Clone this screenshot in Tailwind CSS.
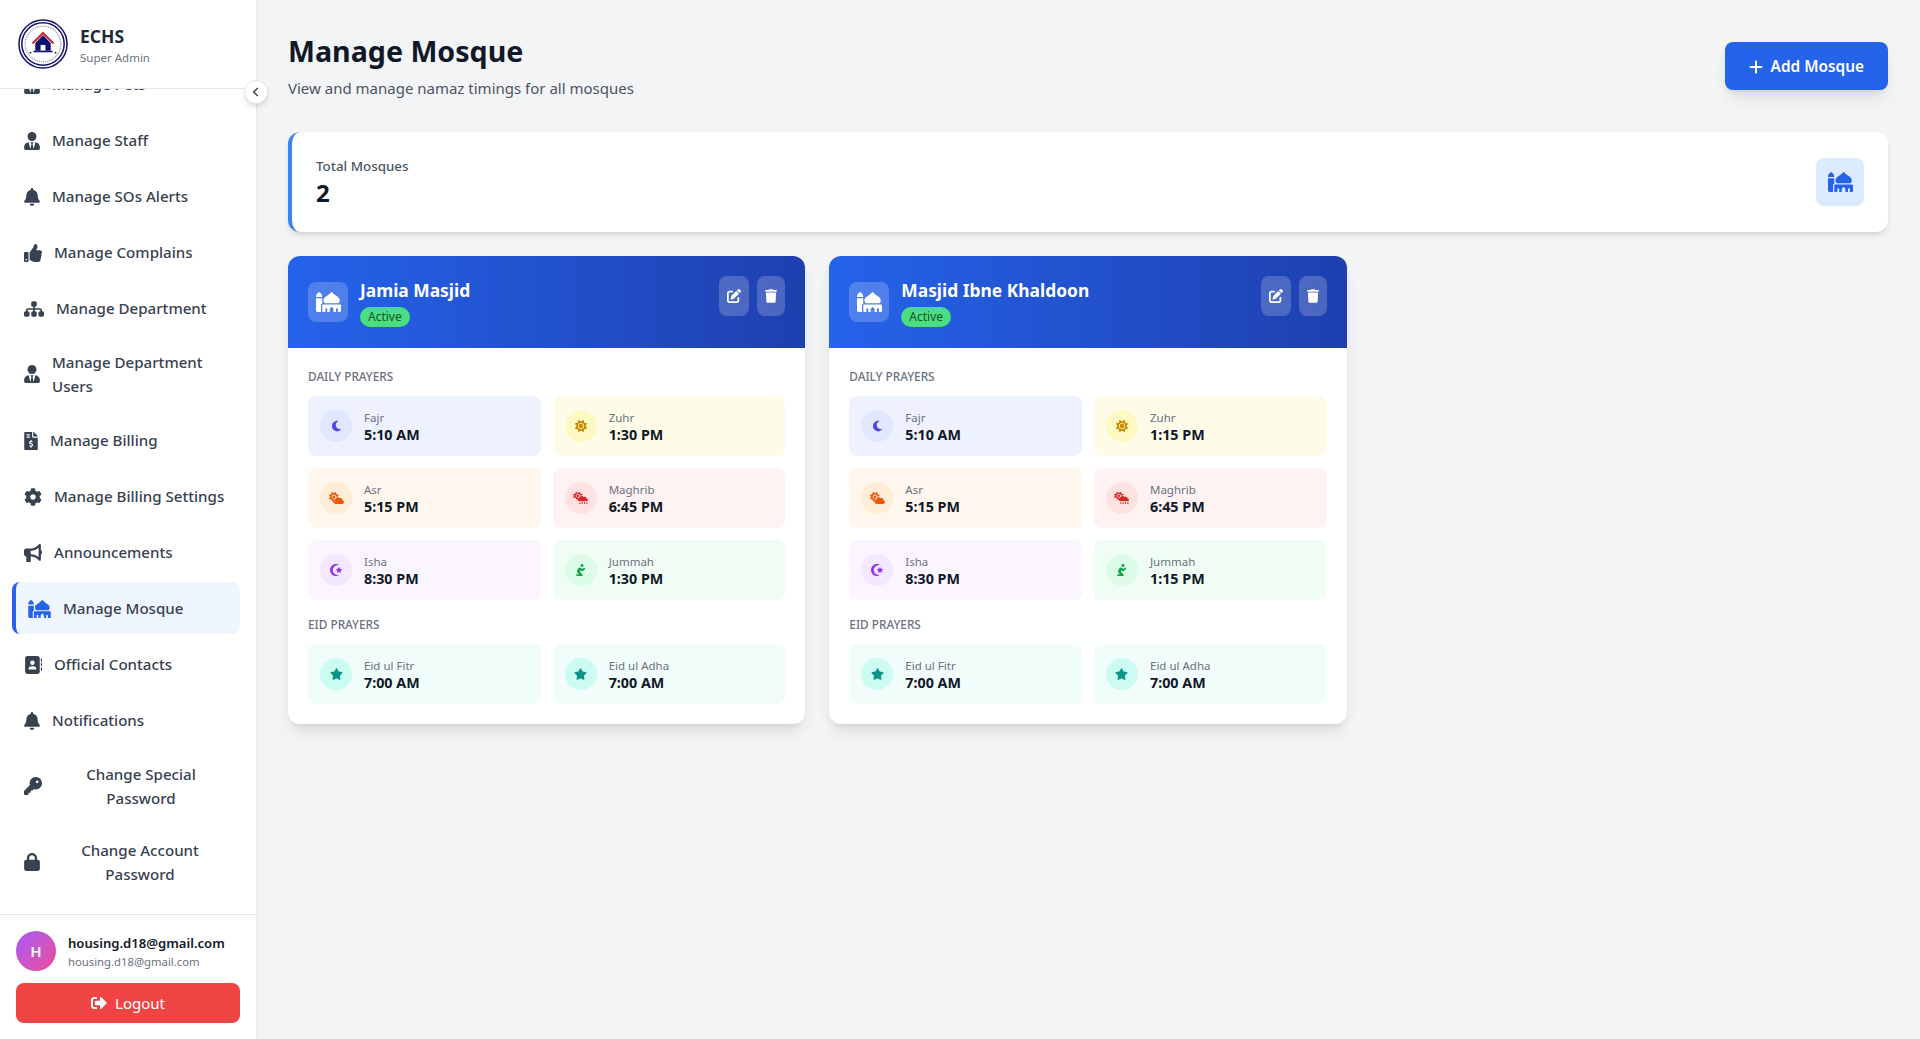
<!DOCTYPE html>
<html lang="en">

<head>
    <meta charset="UTF-8">
    <meta name="viewport" content="width=device-width, initial-scale=1.0">
    <script src="https://cdn.jsdelivr.net/npm/@tailwindcss/browser@4"></script>
    <title>Manage Mosque</title>
</head>

<body class="h-screen overflow-hidden bg-[#f3f4f6] font-['Noto_Sans',sans-serif]">
    <!-- icon sprite -->
    <svg class="hidden">
        <symbol id="i-tie" viewBox="0 0 448 512"><path d="M224 256c70.7 0 128-57.3 128-128S294.7 0 224 0 96 57.3 96 128s57.3 128 128 128zm95.8 32.6L272 480l-32-136 32-56h-96l32 56-32 136-47.8-191.4C56.9 292 0 350.3 0 422.4V464c0 26.5 21.5 48 48 48h352c26.5 0 48-21.5 48-48v-41.6c0-72.1-56.9-130.4-128.2-133.8z"/></symbol>
        <symbol id="i-bell" viewBox="0 0 448 512"><path d="M224 512c35.32 0 63.97-28.65 63.97-64H160.03c0 35.35 28.65 64 63.97 64zm215.39-149.71c-19.32-20.76-55.47-51.99-55.47-154.29 0-77.7-54.48-139.9-127.94-155.16V32c0-17.67-14.32-32-31.98-32s-31.98 14.33-31.98 32v20.84C118.56 68.1 64.08 130.3 64.08 208c0 102.3-36.15 133.53-55.47 154.29-6 6.45-8.66 14.16-8.61 21.71.11 16.4 12.98 32 32.1 32h383.8c19.12 0 32-15.6 32.1-32 .05-7.55-2.61-15.27-8.61-21.71z"/></symbol>
        <symbol id="i-thumb" viewBox="0 0 512 512"><path d="M104 224H24c-13.255 0-24 10.745-24 24v240c0 13.255 10.745 24 24 24h80c13.255 0 24-10.745 24-24V248c0-13.255-10.745-24-24-24zM64 472c-13.255 0-24-10.745-24-24s10.745-24 24-24 24 10.745 24 24-10.745 24-24 24zM384 81.452c0 42.416-25.97 66.208-33.277 94.548h101.723c33.397 0 59.397 27.746 59.553 58.098.084 17.938-7.546 37.249-19.439 49.197l-.11.11c9.836 23.337 8.237 56.037-9.308 79.469 8.681 25.895-.069 57.704-16.382 74.757 4.298 17.598 2.244 32.575-6.148 44.632C440.202 511.587 389.616 512 346.839 512l-2.845-.001c-48.287-.017-87.806-17.598-119.56-31.725-15.957-7.099-36.821-15.887-52.651-16.178-6.54-.12-11.783-5.457-11.783-11.998v-213.77c0-3.2 1.282-6.271 3.558-8.521 39.614-39.144 56.648-80.587 89.117-113.111 14.804-14.832 20.188-37.236 25.393-58.902C282.515 39.293 291.817 0 312 0c24 0 72 8 72 81.452z"/></symbol>
        <symbol id="i-sitemap" viewBox="0 0 576 512"><path d="M208 80c0-26.5 21.5-48 48-48h64c26.5 0 48 21.5 48 48v64c0 26.5-21.5 48-48 48h-8v40H464c30.9 0 56 25.1 56 56v32h8c26.5 0 48 21.5 48 48v64c0 26.5-21.5 48-48 48H464c-26.5 0-48-21.5-48-48V368c0-26.5 21.5-48 48-48h8V288c0-4.4-3.6-8-8-8H312v40h8c26.5 0 48 21.5 48 48v64c0 26.5-21.5 48-48 48H256c-26.5 0-48-21.5-48-48V368c0-26.5 21.5-48 48-48h8V280H112c-4.4 0-8 3.6-8 8v32h8c26.5 0 48 21.5 48 48v64c0 26.5-21.5 48-48 48H48c-26.5 0-48-21.5-48-48V368c0-26.5 21.5-48 48-48h8V288c0-30.9 25.1-56 56-56H264V192h-8c-26.5 0-48-21.5-48-48V80z"/></symbol>
        <symbol id="i-invoice" viewBox="0 0 384 512"><path d="M377 105L279.1 7c-4.5-4.5-10.6-7-17-7H256v128h128v-6.1c0-6.3-2.5-12.4-7-16.9zm-153 31V0H24C10.7 0 0 10.7 0 24v464c0 13.3 10.7 24 24 24h336c13.3 0 24-10.7 24-24V160H248c-13.2 0-24-10.8-24-24zM64 72c0-4.42 3.58-8 8-8h80c4.42 0 8 3.58 8 8v16c0 4.42-3.58 8-8 8H72c-4.42 0-8-3.58-8-8V72zm0 80v-16c0-4.42 3.58-8 8-8h80c4.42 0 8 3.58 8 8v16c0 4.42-3.58 8-8 8H72c-4.42 0-8-3.58-8-8zm144 263.88V440c0 4.42-3.58 8-8 8h-16c-4.42 0-8-3.58-8-8v-24.29c-11.29-.58-22.27-4.52-31.37-11.35-3.9-2.93-4.1-8.77-.57-12.14l11.75-11.21c2.77-2.64 6.89-2.76 10.13-.73 3.87 2.42 8.26 3.72 12.82 3.72h28.11c6.5 0 11.8-5.92 11.8-13.19 0-5.95-3.61-11.19-8.77-12.73l-45-13.5c-18.59-5.58-31.58-23.42-31.58-43.39 0-24.52 19.05-44.44 42.67-45.07V232c0-4.42 3.58-8 8-8h16c4.42 0 8 3.58 8 8v24.29c11.29.58 22.27 4.51 31.37 11.35 3.9 2.93 4.1 8.77.57 12.14l-11.75 11.21c-2.77 2.64-6.89 2.76-10.13.73-3.87-2.43-8.26-3.72-12.82-3.72h-28.11c-6.5 0-11.8 5.92-11.8 13.19 0 5.95 3.61 11.19 8.77 12.73l45 13.5c18.59 5.58 31.58 23.42 31.58 43.39 0 24.53-19.05 44.44-42.67 45.07z"/></symbol>
        <symbol id="i-cog" viewBox="0 0 512 512"><path d="M487.4 315.7l-42.6-24.6c4.3-23.2 4.3-47 0-70.2l42.6-24.6c4.9-2.8 7.1-8.6 5.5-14-11.1-35.6-30-67.8-54.7-94.6-3.8-4.1-10-5.1-14.8-2.3L380.8 110c-17.9-15.4-38.5-27.3-60.8-35.1V25.8c0-5.6-3.9-10.5-9.4-11.7-36.7-8.2-74.3-7.8-109.2 0-5.5 1.2-9.4 6.1-9.4 11.7V75c-22.2 7.9-42.8 19.8-60.8 35.1L88.7 85.5c-4.9-2.8-11-1.9-14.8 2.3-24.7 26.7-43.6 58.9-54.7 94.6-1.7 5.4.6 11.2 5.5 14L67.3 221c-4.3 23.2-4.3 47 0 70.2l-42.6 24.6c-4.9 2.8-7.1 8.6-5.5 14 11.1 35.6 30 67.8 54.7 94.6 3.8 4.1 10 5.1 14.8 2.3l42.6-24.6c17.9 15.4 38.5 27.3 60.8 35.1v49.2c0 5.6 3.9 10.5 9.4 11.7 36.7 8.2 74.3 7.8 109.2 0 5.5-1.2 9.4-6.1 9.4-11.7v-49.2c22.2-7.9 42.8-19.8 60.8-35.1l42.6 24.6c4.9 2.8 11 1.9 14.8-2.3 24.7-26.7 43.6-58.9 54.7-94.6 1.5-5.5-.7-11.3-5.6-14.1zM256 336c-44.1 0-80-35.9-80-80s35.9-80 80-80 80 35.9 80 80-35.9 80-80 80z"/></symbol>
        <symbol id="i-bullhorn" viewBox="0 0 512 512"><path d="M480 32c0-12.9-7.8-24.6-19.8-29.6s-25.7-2.2-34.9 6.9L381.7 53c-48 48-113.1 75-181 75H192 160 64c-35.3 0-64 28.7-64 64v96c0 35.3 28.7 64 64 64l0 128c0 17.7 14.3 32 32 32h64c17.7 0 32-14.3 32-32V352l8.7 0c67.9 0 133 27 181 75l43.6 43.6c9.2 9.2 22.9 11.9 34.9 6.9s19.8-16.6 19.8-29.6V300.4c18.6-8.8 32-32.5 32-60.4s-13.4-51.6-32-60.4V32zm-64 76.7V240 371.3C357.2 317.8 280.5 288 200.7 288H192V192h8.7c79.8 0 156.5-29.8 215.3-83.3z"/></symbol>
        <symbol id="i-mosque" viewBox="0 0 640 512"><path d="M400 0c5 0 9.8 2.4 12.8 6.4c34.7 46.3 78.1 74.9 133.5 111.5l0 0 0 0c5.2 3.4 10.5 7 16 10.6c28.9 19.2 45.7 51.7 45.7 86.1c0 28.6-11.3 54.5-29.8 73.4H221.8c-18.4-19-29.8-44.9-29.8-73.4c0-34.4 16.7-66.9 45.7-86.1c5.4-3.6 10.8-7.1 16-10.6l0 0 0 0C309.1 81.3 352.5 52.7 387.2 6.4c3-4 7.8-6.4 12.8-6.4zM288 512V440c0-13.3-10.7-24-24-24s-24 10.7-24 24v72H192c-17.7 0-32-14.3-32-32V352c0-17.7 14.3-32 32-32H608c17.7 0 32 14.3 32 32V480c0 17.7-14.3 32-32 32H560V440c0-13.3-10.7-24-24-24s-24 10.7-24 24v72H448V454c0-19-8.4-37-23-49.2L400 384l-25 20.8C360.4 417 352 435 352 454v58H288zM70.4 5.2c5.7-4.3 13.5-4.3 19.2 0l16 12C139.8 42.9 160 83.2 160 126v2H0v-2C0 83.2 20.2 42.9 54.4 17.2l16-12zM0 160H160V296.6c-19.1 11.1-32 31.7-32 55.4V480c0 9.6 2.1 18.6 5.8 26.8c-6.6 3.4-14 5.2-21.8 5.2H48c-26.5 0-48-21.5-48-48V176 160z"/></symbol>
        <symbol id="i-contacts" viewBox="0 0 512 512"><path d="M96 0C60.7 0 32 28.7 32 64V448c0 35.3 28.7 64 64 64H384c35.3 0 64-28.7 64-64V64c0-35.3-28.7-64-64-64H96zM208 288h64c44.2 0 80 35.8 80 80c0 8.8-7.2 16-16 16H144c-8.8 0-16-7.2-16-16c0-44.2 35.8-80 80-80zm-32-96a64 64 0 1 1 128 0 64 64 0 1 1 -128 0zM512 80c0-8.8-7.2-16-16-16s-16 7.2-16 16v64c0 8.8 7.2 16 16 16s16-7.2 16-16V80zM496 192c-8.8 0-16 7.2-16 16v64c0 8.8 7.2 16 16 16s16-7.2 16-16V208c0-8.8-7.2-16-16-16zm16 144c0-8.8-7.2-16-16-16s-16 7.2-16 16v64c0 8.8 7.2 16 16 16s16-7.2 16-16V336z"/></symbol>
        <symbol id="i-key" viewBox="0 0 512 512"><path d="M336 352c97.2 0 176-78.8 176-176S433.2 0 336 0S160 78.8 160 176c0 18.7 2.9 36.8 8.3 53.7L7 391c-4.5 4.5-7 10.6-7 17v80c0 13.3 10.7 24 24 24h80c13.3 0 24-10.7 24-24V448h40c13.3 0 24-10.7 24-24V384h40c6.4 0 12.5-2.5 17-7l33.3-33.3c16.9 5.4 35 8.3 53.7 8.3zM376 96a40 40 0 1 1 0 80 40 40 0 1 1 0-80z"/></symbol>
        <symbol id="i-lock" viewBox="0 0 448 512"><path d="M144 144v48H304V144c0-44.2-35.8-80-80-80s-80 35.8-80 80zM80 192V144C80 64.5 144.5 0 224 0s144 64.5 144 144v48h16c35.3 0 64 28.7 64 64V448c0 35.3-28.7 64-64 64H64c-35.3 0-64-28.7-64-64V256c0-35.3 28.7-64 64-64H80z"/></symbol>
        <symbol id="i-logout" viewBox="0 0 512 512"><path d="M497 273L329 441c-15 15-41 4.5-41-17v-96H152c-13.3 0-24-10.7-24-24v-96c0-13.3 10.7-24 24-24h136V88c0-21.4 25.9-32 41-17l168 168c9.3 9.4 9.3 24.6 0 34zM192 436v-40c0-6.6-5.4-12-12-12H96c-17.7 0-32-14.3-32-32V160c0-17.7 14.3-32 32-32h84c6.6 0 12-5.4 12-12V76c0-6.6-5.4-12-12-12H96c-53 0-96 43-96 96v192c0 53 43 96 96 96h84c6.6 0 12-5.4 12-12z"/></symbol>
        <symbol id="i-plus" viewBox="0 0 448 512"><path d="M256 80c0-17.7-14.3-32-32-32s-32 14.3-32 32V224H48c-17.7 0-32 14.3-32 32s14.3 32 32 32H192V432c0 17.7 14.3 32 32 32s32-14.3 32-32V288H400c17.7 0 32-14.3 32-32s-14.3-32-32-32H256V80z"/></symbol>
        <symbol id="i-edit" viewBox="0 0 512 512"><path d="M471.6 21.7c-21.9-21.9-57.3-21.9-79.2 0L362.3 51.7l97.9 97.9 30.1-30.1c21.9-21.9 21.9-57.3 0-79.2L471.6 21.7zm-299.2 220c-6.1 6.1-10.8 13.6-13.5 21.9l-29.6 88.8c-2.9 8.6-.6 18.1 5.8 24.6s15.9 8.7 24.6 5.8l88.8-29.6c8.2-2.7 15.7-7.4 21.9-13.5L437.7 172.3 339.7 74.3 172.4 241.7zM96 64C43 64 0 107 0 160V416c0 53 43 96 96 96H352c53 0 96-43 96-96V320c0-17.7-14.3-32-32-32s-32 14.3-32 32v96c0 17.7-14.3 32-32 32H96c-17.7 0-32-14.3-32-32V160c0-17.7 14.3-32 32-32h96c17.7 0 32-14.3 32-32s-14.3-32-32-32H96z"/></symbol>
        <symbol id="i-trash" viewBox="0 0 448 512"><path d="M135.2 17.7L128 32H32C14.3 32 0 46.3 0 64S14.3 96 32 96H416c17.7 0 32-14.3 32-32s-14.3-32-32-32H320l-7.2-14.3C307.4 6.8 296.3 0 284.2 0H163.8c-12.1 0-23.2 6.8-28.6 17.7zM416 128H32L53.2 467c1.6 25.3 22.6 45 47.9 45H346.9c25.3 0 46.3-19.7 47.9-45L416 128z"/></symbol>
        <symbol id="i-moon" viewBox="0 0 384 512"><path d="M223.5 32C100 32 0 132.3 0 256S100 480 223.5 480c60.6 0 115.5-24.2 155.8-63.4c5-4.9 6.3-12.5 3.1-18.7s-10.1-9.7-17-8.5c-9.8 1.7-19.8 2.6-30.1 2.6c-96.9 0-175.5-78.8-175.5-176c0-65.8 36-123.1 89.3-153.3c6.1-3.5 9.2-10.5 7.7-17.3s-7.3-11.9-14.3-12.5c-6.3-.5-12.6-.8-19-.8z"/></symbol>
        <symbol id="i-sun" viewBox="0 0 512 512"><path d="M361.5 1.2c5 2.1 8.6 6.6 9.6 11.9L391 121l107.9 19.8c5.3 1 9.8 4.6 11.9 9.6s1.5 10.7-1.6 15.2L446.9 256l62.3 90.3c3.1 4.5 3.7 10.2 1.6 15.2s-6.6 8.6-11.9 9.6L391 391 371.1 498.9c-1 5.3-4.6 9.8-9.6 11.9s-10.7 1.5-15.2-1.6L256 446.9l-90.3 62.3c-4.5 3.1-10.2 3.7-15.2 1.6s-8.6-6.6-9.6-11.9L121 391 13.1 371.1c-5.3-1-9.8-4.6-11.9-9.6s-1.5-10.7 1.6-15.2L65.1 256 2.8 165.7c-3.1-4.5-3.7-10.2-1.6-15.2s6.6-8.6 11.9-9.6L121 121 140.9 13.1c1-5.3 4.6-9.8 9.6-11.9s10.7-1.5 15.2 1.6L256 65.1 346.3 2.8c4.5-3.1 10.2-3.7 15.2-1.6zM160 256a96 96 0 1 1 192 0 96 96 0 1 1 -192 0zm224 0a128 128 0 1 0 -256 0 128 128 0 1 0 256 0z"/></symbol>
        <symbol id="i-cloudsun" viewBox="0 0 640 512"><path d="M294.2 1.2c5.1 2.1 8.7 6.7 9.6 12.1l14.1 84.7 84.7 14.1c5.4 .9 10 4.5 12.1 9.6s1.5 10.9-1.6 15.4l-38.5 55c-2.2-.1-4.4-.2-6.7-.2c-23.3 0-45.1 6.2-64 17.1l0-1.1c0-53-43-96-96-96s-96 43-96 96s43 96 96 96c8.1 0 15.9-1 23.4-2.9c-18.2 19.6-30.2 45.3-31.3 74.2c-.1 2.6-.2 5-.1 7.5l-31.8 22.2c-4.5 3.1-10.3 3.7-15.4 1.6s-8.7-6.7-9.6-12.1L98.1 317.9 13.4 303.8c-5.4-.9-10-4.5-12.1-9.6s-1.5-10.9 1.6-15.4L52.5 208 2.9 137.2c-3.2-4.5-3.8-10.3-1.6-15.4s6.7-8.7 12.1-9.6L98.1 98.1l14.1-84.7c.9-5.4 4.5-10 9.6-12.1s10.9-1.5 15.4 1.6L208 52.5 278.8 2.9c4.5-3.2 10.3-3.8 15.4-1.6zM144 208a64 64 0 1 1 128 0 64 64 0 1 1 -128 0zM639.9 431.9c0 44.2-35.8 80-80 80H288c-53 0-96-43-96-96c0-47.6 34.6-87 80-94.6l0-1.3c0-53 43-96 96-96c34.9 0 65.4 18.6 82.2 46.4c13-9.1 28.8-14.4 45.8-14.4c44.2 0 80 35.8 80 80c0 5.9-.6 11.7-1.9 17.2c37.4 6.7 65.8 39.4 65.8 78.7z"/></symbol>
        <symbol id="i-cloudrain" viewBox="0 0 640 512"><g transform="scale(1 .78)"><path d="M294.2 1.2c5.1 2.1 8.7 6.7 9.6 12.1l14.1 84.7 84.7 14.1c5.4 .9 10 4.5 12.1 9.6s1.5 10.9-1.6 15.4l-38.5 55c-2.2-.1-4.4-.2-6.7-.2c-23.3 0-45.1 6.2-64 17.1l0-1.1c0-53-43-96-96-96s-96 43-96 96s43 96 96 96c8.1 0 15.9-1 23.4-2.9c-18.2 19.6-30.2 45.3-31.3 74.2c-.1 2.6-.2 5-.1 7.5l-31.8 22.2c-4.5 3.1-10.3 3.7-15.4 1.6s-8.7-6.7-9.6-12.1L98.1 317.9 13.4 303.8c-5.4-.9-10-4.5-12.1-9.6s-1.5-10.9 1.6-15.4L52.5 208 2.9 137.2c-3.2-4.5-3.8-10.3-1.6-15.4s6.7-8.7 12.1-9.6L98.1 98.1l14.1-84.7c.9-5.4 4.5-10 9.6-12.1s10.9-1.5 15.4 1.6L208 52.5 278.8 2.9c4.5-3.2 10.3-3.8 15.4-1.6zM144 208a64 64 0 1 1 128 0 64 64 0 1 1 -128 0zM639.9 431.9c0 44.2-35.8 80-80 80H288c-53 0-96-43-96-96c0-47.6 34.6-87 80-94.6l0-1.3c0-53 43-96 96-96c34.9 0 65.4 18.6 82.2 46.4c13-9.1 28.8-14.4 45.8-14.4c44.2 0 80 35.8 80 80c0 5.9-.6 11.7-1.9 17.2c37.4 6.7 65.8 39.4 65.8 78.7z"/></g><path d="M270 435h44v77h-44zM370 435h44v77h-44zM470 435h44v77h-44zM570 435h44v77h-44z"/></symbol>
        <symbol id="i-crescent" viewBox="0 0 512 512"><path d="M0 256C0 114.6 114.6 0 256 0c33 0 64.6 6.3 93.6 17.7c7.4 2.9 11.5 10.7 9.8 18.4s-8.8 13-16.7 12.4c-4.8-.3-9.7-.5-14.6-.5c-114.9 0-208 93.1-208 208s93.1 208 208 208c4.9 0 9.8-.2 14.6-.5c7.9-.5 15 4.7 16.7 12.4s-2.4 15.5-9.8 18.4C320.6 505.7 289 512 256 512C114.6 512 0 397.4 0 256zM375.4 137.4c3.5-7.1 13.7-7.1 17.2 0l31.5 63.8c1.4 2.8 4.1 4.8 7.2 5.3l70.4 10.2c7.9 1.1 11 10.8 5.3 16.4l-50.9 49.6c-2.3 2.2-3.3 5.4-2.8 8.5l12 70.1c1.3 7.8-6.9 13.8-13.9 10.1l-63-33.1c-2.8-1.5-6.1-1.5-8.9 0l-63 33.1c-7 3.7-15.3-2.3-13.9-10.1l12-70.1c.5-3.1-.5-6.3-2.8-8.5L261 233.1c-5.7-5.6-2.5-15.2 5.3-16.4l70.4-10.2c3.1-.5 5.8-2.4 7.2-5.3l31.5-63.8z"/></symbol>
        <symbol id="i-pray" viewBox="0 0 384 512"><path d="M256 128c35.35 0 64-28.65 64-64S291.35 0 256 0s-64 28.65-64 64 28.65 64 64 64zm-30.63 169.75c14.06 16.72 39 19.09 55.97 5.22l88-72.02c17.09-13.98 19.59-39.19 5.62-56.28-13.97-17.11-39.19-19.59-56.31-5.62l-57.44 47.02-38.91-46.31c-15.44-18.39-39.22-27.92-64-25.33-24.19 2.53-45.25 16.39-56.37 37.06l-49.37 92.03c-23.4 43.64-8.69 96.37 34.19 123.75L131.56 432H40c-22.09 0-40 17.91-40 40s17.91 40 40 40h208c34.08 0 53.77-42.79 28.28-68.28L166.42 333.86l34.8-64.87 24.15 28.76z"/></symbol>
        <symbol id="i-star" viewBox="0 0 576 512"><path d="M316.9 18C311.6 7 300.4 0 288.1 0s-23.4 7-28.8 18L195 150.3 51.4 171.5c-12 1.8-22 10.2-25.7 21.7s-.7 24.2 7.9 32.7L137.8 329 113.2 474.7c-2 12 3 24.2 12.9 31.3s23 8 33.8 2.3l128.3-68.5 128.3 68.5c10.8 5.7 23.9 4.9 33.8-2.3s14.9-19.3 12.9-31.3L438.5 329 542.7 225.9c8.6-8.5 11.7-21.2 7.9-32.7s-13.7-19.9-25.7-21.7L381.2 150.3 316.9 18z"/></symbol>
    </svg>

    <div class="flex h-full">
        <!-- sidebar -->
        <aside class="relative flex flex-col w-64 h-full bg-white shrink-0 shadow-sm">
            <div class="flex items-center gap-3 h-[89px] pl-[18px] border-b border-gray-200 shrink-0">
                <svg viewBox="0 0 52 52" class="w-[50px] h-[50px] shrink-0">
                    <circle cx="26" cy="26" r="25" fill="#fff" stroke="#13136b" stroke-width="1.6" />
                    <circle cx="26" cy="26" r="22" fill="none" stroke="#13136b" stroke-width="1.6" />
                    <circle cx="26" cy="26" r="18.5" fill="none" stroke="#9a9ab8" stroke-width="1.6" stroke-dasharray="1 1" />
                    <path d="M26 13 L38 25 L36 26 L26 16.5 L16 26 L14 25 Z" fill="#c8303a" />
                    <path d="M26 17 L34 25 V33 H18 V25 Z" fill="#10106e" />
                    <rect x="23.5" y="27" width="5" height="6" fill="#fff" />
                    <rect x="16" y="33" width="20" height="1.6" fill="#10106e" />
                    <circle cx="13" cy="35" r="1" fill="#222" />
                    <circle cx="39" cy="35" r="1" fill="#222" />
                </svg>
                <div class="pt-0.5">
                    <p class="text-[17.5px] leading-6 font-bold text-[#1f2937]">ECHS</p>
                    <p class="text-[11.5px] leading-4 mt-0.5 text-[#6b7280]">Super Admin</p>
                </div>
            </div>

            <nav class="flex-1 overflow-hidden pl-3 pr-4 text-[15.1px] font-medium text-[#374151]">
                <div class="flex flex-col gap-1 -mt-[31px]">
                    <a class="flex items-center gap-3 h-[52px] px-3 pt-px"><svg class="w-[16px] h-[18px] fill-current shrink-0"><use href="#i-tie" /></svg>Manage Pets</a>
                    <a class="flex items-center gap-3 h-[52px] px-3 pt-px"><svg class="w-[16px] h-[18px] fill-current shrink-0"><use href="#i-tie" /></svg>Manage Staff</a>
                    <a class="flex items-center gap-3 h-[52px] px-3 pt-px"><svg class="w-[16px] h-[18px] fill-current shrink-0"><use href="#i-bell" /></svg>Manage SOs Alerts</a>
                    <a class="flex items-center gap-3 h-[52px] px-3 pt-px"><svg class="w-[18px] h-[18px] fill-current shrink-0"><use href="#i-thumb" /></svg>Manage Complains</a>
                    <a class="flex items-center gap-3 h-[52px] px-3 pt-px"><svg class="w-[20px] h-[18px] fill-current shrink-0"><use href="#i-sitemap" /></svg>Manage Department</a>
                    <a class="flex items-center gap-3 h-[72px] px-3 leading-6"><svg class="w-[16px] h-[18px] fill-current shrink-0"><use href="#i-tie" /></svg><span>Manage Department Users</span></a>
                    <a class="flex items-center gap-3 h-[52px] px-3 pt-px"><svg class="w-[14px] h-[18px] fill-current shrink-0"><use href="#i-invoice" /></svg>Manage Billing</a>
                    <a class="flex items-center gap-3 h-[52px] px-3 pt-px"><svg class="w-[18px] h-[18px] fill-current shrink-0"><use href="#i-cog" /></svg>Manage Billing Settings</a>
                    <a class="flex items-center gap-3 h-[52px] px-3 pt-px"><svg class="w-[18px] h-[18px] fill-current shrink-0"><use href="#i-bullhorn" /></svg>Announcements</a>
                    <a class="flex items-center gap-3 h-[52px] px-3 pt-px border-l-4 border-[#2563eb] bg-[#eff6ff] rounded-lg"><svg class="w-[23px] h-[18px] fill-current text-[#2563eb] shrink-0"><use href="#i-mosque" /></svg>Manage Mosque</a>
                    <a class="flex items-center gap-3 h-[52px] px-3 pt-px"><svg class="w-[18px] h-[18px] fill-current shrink-0"><use href="#i-contacts" /></svg>Official Contacts</a>
                    <a class="flex items-center gap-3 h-[52px] px-3 pt-px"><svg class="w-[16px] h-[18px] fill-current shrink-0"><use href="#i-bell" /></svg>Notifications</a>
                    <a class="flex items-center gap-3 h-[72px] px-3 leading-6"><svg class="w-[18px] h-[18px] fill-current shrink-0"><use href="#i-key" /></svg><span class="flex-1 text-center">Change Special Password</span></a>
                    <a class="flex items-center gap-3 h-[72px] px-3 leading-6"><svg class="w-[16px] h-[18px] fill-current shrink-0"><use href="#i-lock" /></svg><span class="flex-1 text-center">Change Account Password</span></a>
                </div>
            </nav>

            <div class="shrink-0 h-[125px] px-4 pt-4 border-t border-gray-200">
                <div class="flex items-center gap-3">
                    <div class="flex items-center justify-center w-10 h-10 rounded-full bg-linear-to-br from-[#a855f7] to-[#ec4899] text-white text-[15px] font-semibold">H</div>
                    <div>
                        <p class="text-[13.1px] leading-5 font-semibold text-[#111827]">housing.d18@gmail.com</p>
                        <p class="text-[11.3px] leading-4 mt-px text-[#6b7280]">housing.d18@gmail.com</p>
                    </div>
                </div>
                <button class="flex items-center justify-center gap-2 w-full h-10 mt-3 rounded-lg bg-[#ef4444] text-white text-[15px]">
                    <svg class="w-4 h-4 fill-current"><use href="#i-logout" /></svg>Logout
                </button>
            </div>

            <!-- collapse toggle -->
            <button class="absolute top-20 -right-3 flex items-center justify-center w-6 h-6 rounded-full bg-white border border-gray-200 shadow-md text-[#374151]">
                <svg viewBox="0 0 24 24" class="w-3.5 h-3.5 fill-none stroke-current stroke-[2.5]"><path d="M15 5l-7 7 7 7" /></svg>
            </button>
        </aside>

        <!-- main -->
        <main class="flex-1 p-8">
            <div class="flex items-center justify-between mb-8">
                <div>
                    <h1 class="text-[28.6px] leading-[38px] font-bold text-[#111827]">Manage Mosque</h1>
                    <p class="mt-1.5 text-[15px] leading-6 text-[#4b5563]">View and manage namaz timings for all mosques</p>
                </div>
                <button class="flex items-center gap-2 h-12 px-6 pt-px rounded-lg bg-[#2563eb] text-white text-[15.4px] font-semibold shadow-lg">
                    <svg class="w-[14px] h-4 fill-current"><use href="#i-plus" /></svg>Add Mosque
                </button>
            </div>

            <div class="flex items-center justify-between h-[100px] p-6 mb-6 bg-white rounded-xl border-l-4 border-[#3b82f6] shadow-md">
                <div class="pt-0.5">
                    <p class="text-[13.4px] leading-5 font-medium text-[#4b5563]">Total Mosques</p>
                    <p class="text-2xl leading-[34px] font-bold text-[#111827]">2</p>
                </div>
                <div class="flex items-center justify-center w-12 h-12 rounded-lg bg-[#dbeafe] text-[#2563eb]">
                    <svg class="w-[25px] h-5 fill-current"><use href="#i-mosque" /></svg>
                </div>
            </div>

            <div class="grid grid-cols-3 gap-6">
                <!-- Jamia Masjid -->
                <div class="bg-white rounded-xl shadow-lg overflow-hidden">
                    <div class="flex items-start justify-between h-[92px] px-5 pt-5 bg-linear-to-r from-[#2563eb] to-[#1e40af]">
                        <div class="flex items-center gap-3 pt-0.5">
                            <div class="flex items-center justify-center w-10 h-10 rounded-lg bg-white/20 text-white">
                                <svg class="w-[25px] h-5 fill-current"><use href="#i-mosque" /></svg>
                            </div>
                            <div>
                                <h3 class="text-[17.4px] leading-6 font-bold text-white">Jamia Masjid</h3>
                                <span class="inline-flex items-center h-5 px-2 translate-y-px rounded-full bg-[#4ade80] text-[#14532d] text-xs">Active</span>
                            </div>
                        </div>
                        <div class="flex gap-2">
                            <button class="flex items-center justify-center w-[30px] h-10 rounded-lg bg-white/20 text-white"><svg class="w-3.5 h-3.5 fill-current"><use href="#i-edit" /></svg></button>
                            <button class="flex items-center justify-center w-7 h-10 rounded-lg bg-white/20 text-white"><svg class="w-3 h-3.5 fill-current"><use href="#i-trash" /></svg></button>
                        </div>
                    </div>
                    <div class="p-5">
                        <h4 class="mb-3 text-[11.8px] leading-4 font-medium uppercase text-[#6b7280]">Daily Prayers</h4>
                        <div class="grid grid-cols-2 gap-3">
                            <div class="flex items-center gap-3 h-[60px] px-3 rounded-lg bg-[#eef2ff]">
                                <div class="flex items-center justify-center w-8 h-8 rounded-full bg-[#e0e7ff] text-[#4f46e5]"><svg class="w-[9px] h-3 fill-current"><use href="#i-moon" /></svg></div>
                                <div><p class="text-[11.5px] leading-[17px] text-[#6b7280]">Fajr</p><p class="text-[14.3px] leading-[18px] font-bold text-[#111827]">5:10 AM</p></div>
                            </div>
                            <div class="flex items-center gap-3 h-[60px] px-3 rounded-lg bg-[#fefce8]">
                                <div class="flex items-center justify-center w-8 h-8 rounded-full bg-[#fef9c3] text-[#ca8a04]"><svg class="w-3 h-3 fill-current"><use href="#i-sun" /></svg></div>
                                <div><p class="text-[11.5px] leading-[17px] text-[#6b7280]">Zuhr</p><p class="text-[14.3px] leading-[18px] font-bold text-[#111827]">1:30 PM</p></div>
                            </div>
                            <div class="flex items-center gap-3 h-[60px] px-3 rounded-lg bg-[#fff7ed]">
                                <div class="flex items-center justify-center w-8 h-8 rounded-full bg-[#ffedd5] text-[#ea580c]"><svg class="w-[15px] h-3 fill-current"><use href="#i-cloudsun" /></svg></div>
                                <div><p class="text-[11.5px] leading-[17px] text-[#6b7280]">Asr</p><p class="text-[14.3px] leading-[18px] font-bold text-[#111827]">5:15 PM</p></div>
                            </div>
                            <div class="flex items-center gap-3 h-[60px] px-3 rounded-lg bg-[#fef2f2]">
                                <div class="flex items-center justify-center w-8 h-8 rounded-full bg-[#fee2e2] text-[#dc2626]"><svg class="w-[15px] h-3 fill-current"><use href="#i-cloudrain" /></svg></div>
                                <div><p class="text-[11.5px] leading-[17px] text-[#6b7280]">Maghrib</p><p class="text-[14.3px] leading-[18px] font-bold text-[#111827]">6:45 PM</p></div>
                            </div>
                            <div class="flex items-center gap-3 h-[60px] px-3 rounded-lg bg-[#faf5ff]">
                                <div class="flex items-center justify-center w-8 h-8 rounded-full bg-[#f3e8ff] text-[#9333ea]"><svg class="w-3 h-3 fill-current"><use href="#i-crescent" /></svg></div>
                                <div><p class="text-[11.5px] leading-[17px] text-[#6b7280]">Isha</p><p class="text-[14.3px] leading-[18px] font-bold text-[#111827]">8:30 PM</p></div>
                            </div>
                            <div class="flex items-center gap-3 h-[60px] px-3 rounded-lg bg-[#f0fdf4]">
                                <div class="flex items-center justify-center w-8 h-8 rounded-full bg-[#dcfce7] text-[#16a34a]"><svg class="w-[9px] h-3 fill-current"><use href="#i-pray" /></svg></div>
                                <div><p class="text-[11.5px] leading-[17px] text-[#6b7280]">Jummah</p><p class="text-[14.3px] leading-[18px] font-bold text-[#111827]">1:30 PM</p></div>
                            </div>
                        </div>
                        <h4 class="mt-4 mb-3 text-[11.8px] leading-4 font-medium uppercase text-[#6b7280]">Eid Prayers</h4>
                        <div class="grid grid-cols-2 gap-3">
                            <div class="flex items-center gap-3 h-[60px] px-3 rounded-lg bg-[#f0fdfa]">
                                <div class="flex items-center justify-center w-8 h-8 rounded-full bg-[#ccfbf1] text-[#0d9488]"><svg class="w-[13px] h-3 fill-current"><use href="#i-star" /></svg></div>
                                <div><p class="text-[11.5px] leading-[17px] text-[#6b7280]">Eid ul Fitr</p><p class="text-[14.3px] leading-[18px] font-bold text-[#111827]">7:00 AM</p></div>
                            </div>
                            <div class="flex items-center gap-3 h-[60px] px-3 rounded-lg bg-[#f0fdfa]">
                                <div class="flex items-center justify-center w-8 h-8 rounded-full bg-[#ccfbf1] text-[#0d9488]"><svg class="w-[13px] h-3 fill-current"><use href="#i-star" /></svg></div>
                                <div><p class="text-[11.5px] leading-[17px] text-[#6b7280]">Eid ul Adha</p><p class="text-[14.3px] leading-[18px] font-bold text-[#111827]">7:00 AM</p></div>
                            </div>
                        </div>
                    </div>
                </div>

                <!-- Masjid Ibne Khaldoon -->
                <div class="bg-white rounded-xl shadow-lg overflow-hidden self-start">
                    <div class="flex items-start justify-between h-[92px] px-5 pt-5 bg-linear-to-r from-[#2563eb] to-[#1e40af]">
                        <div class="flex items-center gap-3 pt-0.5">
                            <div class="flex items-center justify-center w-10 h-10 rounded-lg bg-white/20 text-white">
                                <svg class="w-[25px] h-5 fill-current"><use href="#i-mosque" /></svg>
                            </div>
                            <div>
                                <h3 class="text-[17.4px] leading-6 font-bold text-white">Masjid Ibne Khaldoon</h3>
                                <span class="inline-flex items-center h-5 px-2 translate-y-px rounded-full bg-[#4ade80] text-[#14532d] text-xs">Active</span>
                            </div>
                        </div>
                        <div class="flex gap-2">
                            <button class="flex items-center justify-center w-[30px] h-10 rounded-lg bg-white/20 text-white"><svg class="w-3.5 h-3.5 fill-current"><use href="#i-edit" /></svg></button>
                            <button class="flex items-center justify-center w-7 h-10 rounded-lg bg-white/20 text-white"><svg class="w-3 h-3.5 fill-current"><use href="#i-trash" /></svg></button>
                        </div>
                    </div>
                    <div class="p-5">
                        <h4 class="mb-3 text-[11.8px] leading-4 font-medium uppercase text-[#6b7280]">Daily Prayers</h4>
                        <div class="grid grid-cols-2 gap-3">
                            <div class="flex items-center gap-3 h-[60px] px-3 rounded-lg bg-[#eef2ff]">
                                <div class="flex items-center justify-center w-8 h-8 rounded-full bg-[#e0e7ff] text-[#4f46e5]"><svg class="w-[9px] h-3 fill-current"><use href="#i-moon" /></svg></div>
                                <div><p class="text-[11.5px] leading-[17px] text-[#6b7280]">Fajr</p><p class="text-[14.3px] leading-[18px] font-bold text-[#111827]">5:10 AM</p></div>
                            </div>
                            <div class="flex items-center gap-3 h-[60px] px-3 rounded-lg bg-[#fefce8]">
                                <div class="flex items-center justify-center w-8 h-8 rounded-full bg-[#fef9c3] text-[#ca8a04]"><svg class="w-3 h-3 fill-current"><use href="#i-sun" /></svg></div>
                                <div><p class="text-[11.5px] leading-[17px] text-[#6b7280]">Zuhr</p><p class="text-[14.3px] leading-[18px] font-bold text-[#111827]">1:15 PM</p></div>
                            </div>
                            <div class="flex items-center gap-3 h-[60px] px-3 rounded-lg bg-[#fff7ed]">
                                <div class="flex items-center justify-center w-8 h-8 rounded-full bg-[#ffedd5] text-[#ea580c]"><svg class="w-[15px] h-3 fill-current"><use href="#i-cloudsun" /></svg></div>
                                <div><p class="text-[11.5px] leading-[17px] text-[#6b7280]">Asr</p><p class="text-[14.3px] leading-[18px] font-bold text-[#111827]">5:15 PM</p></div>
                            </div>
                            <div class="flex items-center gap-3 h-[60px] px-3 rounded-lg bg-[#fef2f2]">
                                <div class="flex items-center justify-center w-8 h-8 rounded-full bg-[#fee2e2] text-[#dc2626]"><svg class="w-[15px] h-3 fill-current"><use href="#i-cloudrain" /></svg></div>
                                <div><p class="text-[11.5px] leading-[17px] text-[#6b7280]">Maghrib</p><p class="text-[14.3px] leading-[18px] font-bold text-[#111827]">6:45 PM</p></div>
                            </div>
                            <div class="flex items-center gap-3 h-[60px] px-3 rounded-lg bg-[#faf5ff]">
                                <div class="flex items-center justify-center w-8 h-8 rounded-full bg-[#f3e8ff] text-[#9333ea]"><svg class="w-3 h-3 fill-current"><use href="#i-crescent" /></svg></div>
                                <div><p class="text-[11.5px] leading-[17px] text-[#6b7280]">Isha</p><p class="text-[14.3px] leading-[18px] font-bold text-[#111827]">8:30 PM</p></div>
                            </div>
                            <div class="flex items-center gap-3 h-[60px] px-3 rounded-lg bg-[#f0fdf4]">
                                <div class="flex items-center justify-center w-8 h-8 rounded-full bg-[#dcfce7] text-[#16a34a]"><svg class="w-[9px] h-3 fill-current"><use href="#i-pray" /></svg></div>
                                <div><p class="text-[11.5px] leading-[17px] text-[#6b7280]">Jummah</p><p class="text-[14.3px] leading-[18px] font-bold text-[#111827]">1:15 PM</p></div>
                            </div>
                        </div>
                        <h4 class="mt-4 mb-3 text-[11.8px] leading-4 font-medium uppercase text-[#6b7280]">Eid Prayers</h4>
                        <div class="grid grid-cols-2 gap-3">
                            <div class="flex items-center gap-3 h-[60px] px-3 rounded-lg bg-[#f0fdfa]">
                                <div class="flex items-center justify-center w-8 h-8 rounded-full bg-[#ccfbf1] text-[#0d9488]"><svg class="w-[13px] h-3 fill-current"><use href="#i-star" /></svg></div>
                                <div><p class="text-[11.5px] leading-[17px] text-[#6b7280]">Eid ul Fitr</p><p class="text-[14.3px] leading-[18px] font-bold text-[#111827]">7:00 AM</p></div>
                            </div>
                            <div class="flex items-center gap-3 h-[60px] px-3 rounded-lg bg-[#f0fdfa]">
                                <div class="flex items-center justify-center w-8 h-8 rounded-full bg-[#ccfbf1] text-[#0d9488]"><svg class="w-[13px] h-3 fill-current"><use href="#i-star" /></svg></div>
                                <div><p class="text-[11.5px] leading-[17px] text-[#6b7280]">Eid ul Adha</p><p class="text-[14.3px] leading-[18px] font-bold text-[#111827]">7:00 AM</p></div>
                            </div>
                        </div>
                    </div>
                </div>
            </div>
        </main>
    </div>
</body>

</html>
